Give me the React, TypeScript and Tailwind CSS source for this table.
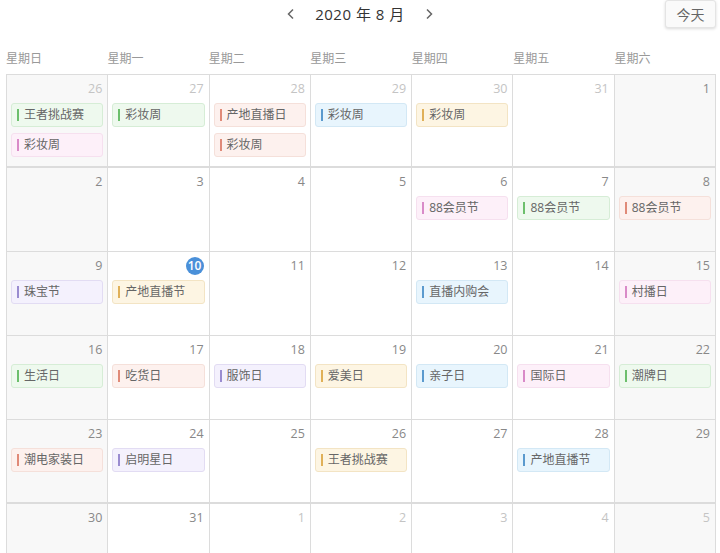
import React from "react";

type Tone = "green" | "pink" | "red" | "blue" | "yellow" | "purple";

const toneClasses: Record<Tone, { box: string; bar: string }> = {
  green: { box: "bg-[#eef9ee] border-[#d6edd6]", bar: "bg-[#6cbf6c]" },
  pink: { box: "bg-[#fdf0f9] border-[#f6e0ef]", bar: "bg-[#d98ac8]" },
  red: { box: "bg-[#fdf1ee] border-[#f5e0da]", bar: "bg-[#e08a78]" },
  blue: { box: "bg-[#e8f5fd] border-[#d3e8f5]", bar: "bg-[#5b9ace]" },
  yellow: { box: "bg-[#fdf5e3] border-[#f3e4c4]", bar: "bg-[#e0b058]" },
  purple: { box: "bg-[#f4f1fd] border-[#e2dcf3]", bar: "bg-[#9a8cd0]" },
};

interface Day {
  n: number;
  muted?: boolean;
  today?: boolean;
  events?: [string, Tone][];
}

const weeks: Day[][] = [
  [
    { n: 26, muted: true, events: [["王者挑战赛", "green"], ["彩妆周", "pink"]] },
    { n: 27, muted: true, events: [["彩妆周", "green"]] },
    { n: 28, muted: true, events: [["产地直播日", "red"], ["彩妆周", "red"]] },
    { n: 29, muted: true, events: [["彩妆周", "blue"]] },
    { n: 30, muted: true, events: [["彩妆周", "yellow"]] },
    { n: 31, muted: true },
    { n: 1 },
  ],
  [
    { n: 2 },
    { n: 3 },
    { n: 4 },
    { n: 5 },
    { n: 6, events: [["88会员节", "pink"]] },
    { n: 7, events: [["88会员节", "green"]] },
    { n: 8, events: [["88会员节", "red"]] },
  ],
  [
    { n: 9, events: [["珠宝节", "purple"]] },
    { n: 10, today: true, events: [["产地直播节", "yellow"]] },
    { n: 11 },
    { n: 12 },
    { n: 13, events: [["直播内购会", "blue"]] },
    { n: 14 },
    { n: 15, events: [["村播日", "pink"]] },
  ],
  [
    { n: 16, events: [["生活日", "green"]] },
    { n: 17, events: [["吃货日", "red"]] },
    { n: 18, events: [["服饰日", "purple"]] },
    { n: 19, events: [["爱美日", "yellow"]] },
    { n: 20, events: [["亲子日", "blue"]] },
    { n: 21, events: [["国际日", "pink"]] },
    { n: 22, events: [["潮牌日", "green"]] },
  ],
  [
    { n: 23, events: [["潮电家装日", "red"]] },
    { n: 24, events: [["启明星日", "purple"]] },
    { n: 25 },
    { n: 26, events: [["王者挑战赛", "yellow"]] },
    { n: 27 },
    { n: 28, events: [["产地直播节", "blue"]] },
    { n: 29 },
  ],
  [
    { n: 30 },
    { n: 31 },
    { n: 1, muted: true },
    { n: 2, muted: true },
    { n: 3, muted: true },
    { n: 4, muted: true },
    { n: 5, muted: true },
  ],
];

const weekdays = ["星期日", "星期一", "星期二", "星期三", "星期四", "星期五", "星期六"];

function EventChip({ label, tone }: { label: string; tone: Tone }) {
  const t = toneClasses[tone];
  return (
    <div className={`flex h-6 items-center rounded-[3px] border ${t.box}`}>
      <span className={`ml-[5px] h-[12px] w-[2px] ${t.bar}`} />
      <span className="ml-[5px] text-[12px] leading-none text-[#666]">{label}</span>
    </div>
  );
}

export default function App() {
  return (
    <div
      className="h-[553px] w-[720px] overflow-hidden bg-white"
      style={{ fontFamily: '"Open Sans", "Noto Sans CJK SC", sans-serif' }}
    >
      <div className="relative flex h-[28px] items-center justify-center">
        <div className="flex items-center gap-[14px] text-[#333]">
          <svg width="16" height="16" viewBox="0 0 16 16" className="mr-[2px] text-[#666]">
            <path d="M10 3.5 5.5 8 10 12.5" fill="none" stroke="currentColor" strokeWidth="1.5" />
          </svg>
          <span className="text-[15px] tracking-[0.5px]">2020 年 8 月</span>
          <svg width="16" height="16" viewBox="0 0 16 16" className="ml-[2px] text-[#666]">
            <path d="M6 3.5 10.5 8 6 12.5" fill="none" stroke="currentColor" strokeWidth="1.5" />
          </svg>
        </div>
        <button className="absolute right-[4px] top-0 h-[28px] w-[51px] rounded-[3px] border border-[#e4e4e4] bg-[#fafafa] text-[14px] text-[#666] shadow-[0_1px_3px_rgba(0,0,0,0.15)]">
          今天
        </button>
      </div>

      <div className="ml-[6px] mr-[4px] mt-[20px]">
        <div className="grid h-[26px] grid-cols-7 items-start">
          {weekdays.map((w) => (
            <div key={w} className="text-[12px] leading-[22px] text-[#999]">
              {w}
            </div>
          ))}
        </div>

        <div className="border-l border-t border-[#dcdcdc]">
          {weeks.map((week, wi) => (
            <div
              key={wi}
              className={`grid min-h-[84px] grid-cols-7 border-[#dcdcdc] ${
                wi === 0 || wi === 4 ? "border-b-2" : "border-b"
              }`}
            >
              {week.map((d, di) => (
                <div
                  key={di}
                  className={`border-r border-[#dcdcdc] px-[4px] pb-[9px] pt-[5px] ${
                    di === 0 || di === 6 ? "bg-[#f8f8f8]" : "bg-white"
                  }`}
                >
                  <div className="flex h-[18px] items-center justify-end pr-[1px]">
                    {d.today ? (
                      <span className="flex h-[18px] w-[18px] items-center justify-center rounded-full bg-[#4a90d9] text-[12px] font-semibold text-white">
                        {d.n}
                      </span>
                    ) : (
                      <span
                        className={`text-[12.5px] ${d.muted ? "text-[#c4c4c4]" : "text-[#888]"}`}
                      >
                        {d.n}
                      </span>
                    )}
                  </div>
                  <div className="mt-[5px] flex flex-col gap-[6px]">
                    {d.events?.map(([label, tone], i) => (
                      <EventChip key={i} label={label} tone={tone} />
                    ))}
                  </div>
                </div>
              ))}
            </div>
          ))}
        </div>
      </div>
    </div>
  );
}
